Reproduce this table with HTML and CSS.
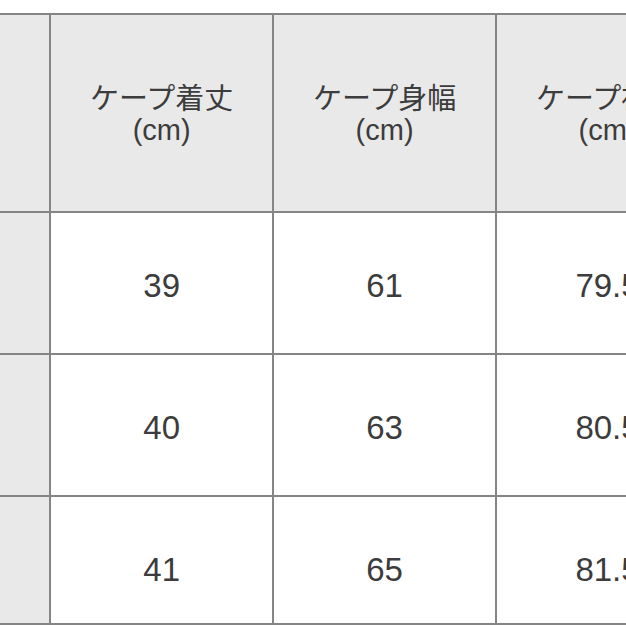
FILE: index.html
```html
<!DOCTYPE html>
<html lang="ja">
<head>
<meta charset="utf-8">
<link rel="stylesheet" href="styles.css">
</head>
<body>
<div class="wrap">
<table class="size">
  <colgroup>
    <col class="c-side">
    <col class="c-data">
    <col class="c-data">
    <col class="c-data">
  </colgroup>
  <thead>
    <tr class="head">
      <th class="side"></th>
      <th>ケープ着丈<br>(cm)</th>
      <th>ケープ身幅<br>(cm)</th>
      <th>ケープ裄丈<br>(cm)</th>
    </tr>
  </thead>
  <tbody>
    <tr class="r1">
      <th class="side"></th>
      <td>39</td>
      <td>61</td>
      <td>79.5</td>
    </tr>
    <tr class="r2">
      <th class="side"></th>
      <td>40</td>
      <td>63</td>
      <td>80.5</td>
    </tr>
    <tr class="r3">
      <th class="side"></th>
      <td>41</td>
      <td>65</td>
      <td>81.5</td>
    </tr>
  </tbody>
</table>
</div>
</body>
</html>
```

FILE: styles.css
```css
html, body {
  margin: 0;
  padding: 0;
  background: #ffffff;
  overflow: hidden;
}
.wrap {
  width: 626px;
  height: 626px;
  overflow: hidden;
  padding-top: 13px;
  box-sizing: border-box;
}
.size {
  border-collapse: separate;
  border-spacing: 0;
  table-layout: fixed;
  width: 720px;
  font-family: "Liberation Sans", "Noto Sans CJK JP", sans-serif;
  color: #3c3c3c;
}
.c-side { width: 51px; }
.c-data { width: 222px; }
.size th, .size td {
  padding: 0;
  border-right: 2px solid #858585;
  border-bottom: 2px solid #858585;
  text-align: center;
  vertical-align: middle;
  font-weight: normal;
}
.head th {
  border-top: 2px solid #858585;
  background: #e9e9e9;
  height: 200px;
  font-size: 29px;
  line-height: 31px;
  padding-top: 4px;
  box-sizing: border-box;
}
.size .side {
  background: #e9e9e9;
}
.size td {
  font-size: 33px;
  background: #ffffff;
  padding-top: 6px;
}
.r1 td, .r2 td { height: 134px; }
.r1 th, .r2 th { height: 140px; }
.r3 td { height: 106px; padding-top: 20px; }
.r3 th { height: 126px; }
```
